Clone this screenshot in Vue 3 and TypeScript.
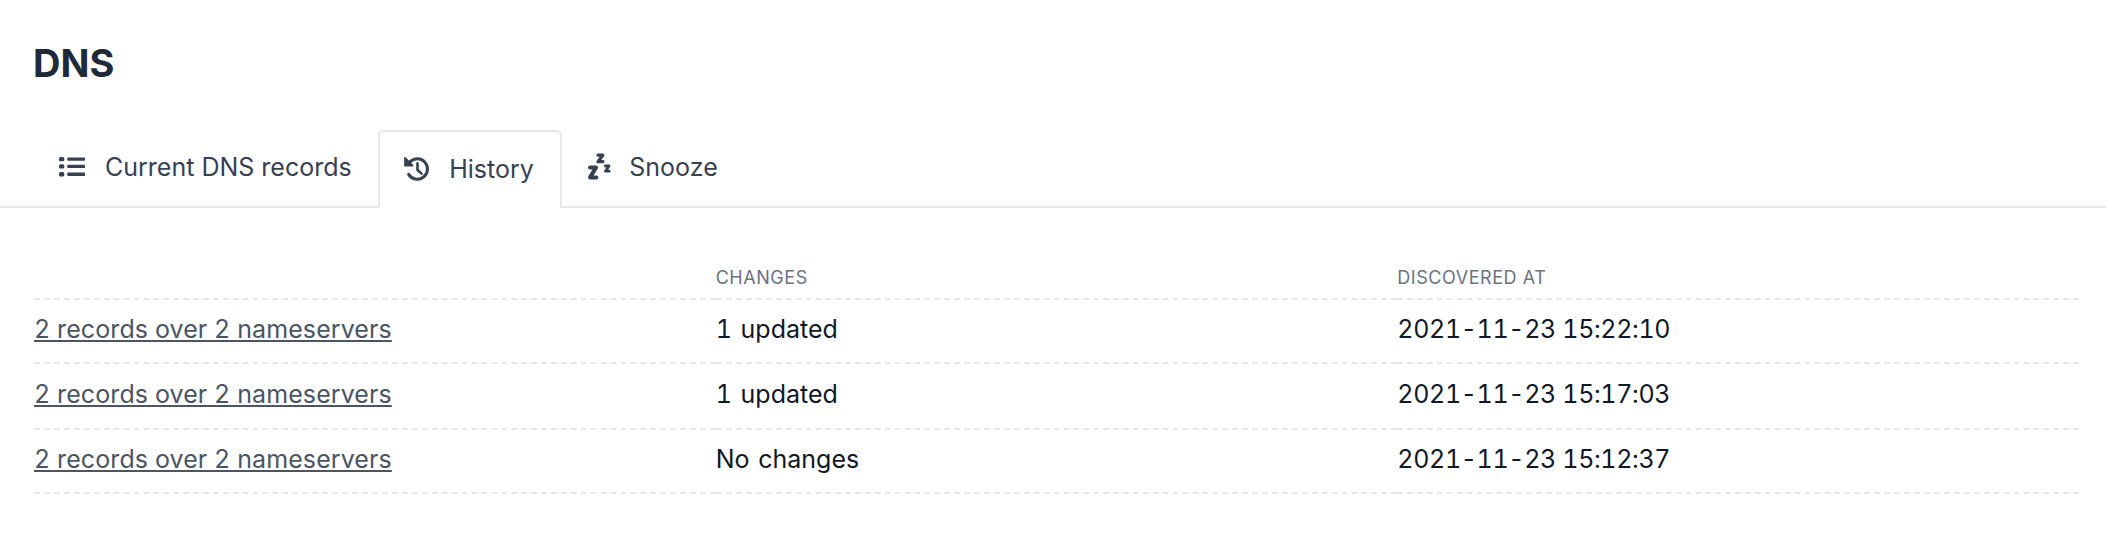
<script setup lang="ts">
interface Row { changes: string; at: string }
const rows: Row[] = [
  { changes: '1 updated', at: '2021-11-23 15:22:10' },
  { changes: '1 updated', at: '2021-11-23 15:17:03' },
  { changes: 'No changes', at: '2021-11-23 15:12:37' },
]
</script>

<template>
  <div class="page">
    <h1 class="title">DNS</h1>
    <nav class="tabs">
      <a class="tab">
        <svg class="icon list" viewBox="0 0 28 24" fill="currentColor">
          <rect x="1" y="2" width="5.3" height="4.2" rx="1.5" />
          <rect x="1" y="9.2" width="5.3" height="4.4" rx="1.5" />
          <rect x="1" y="17" width="5.3" height="4.4" rx="1.5" />
          <rect x="9.3" y="2.4" width="17.7" height="3.4" rx="0.7" />
          <rect x="9.3" y="9.7" width="17.7" height="3.4" rx="0.7" />
          <rect x="9.3" y="17.5" width="17.7" height="3.4" rx="0.7" />
        </svg>
        <span>Current DNS records</span>
      </a>
      <a class="tab active">
        <svg class="icon history" viewBox="0 0 27 27" fill="none" stroke="currentColor">
          <path d="M7 6.9A10.2 10.2 0 1 1 5.6 19.4" stroke-width="3" stroke-linecap="round" />
          <path d="M2 3v7.6h7.6z" fill="currentColor" stroke-width="1.8" stroke-linejoin="round" />
          <path d="M14.5 8.2V15l4 3.6" stroke-width="2.6" stroke-linecap="round" stroke-linejoin="round" />
        </svg>
        <span>History</span>
      </a>
      <a class="tab">
        <svg class="icon snooze" viewBox="0 0 24 27" fill="none" stroke="currentColor" stroke-linecap="round" stroke-linejoin="round">
          <path d="M3 14.6h6L3 24.4h6.4" stroke-width="4" />
          <path d="M11 2.2h4.8L11 8.6h5" stroke-width="3.2" />
          <path d="M18.4 13h3.6L18.4 18.2h3.8" stroke-width="2.8" />
        </svg>
        <span>Snooze</span>
      </a>
    </nav>
    <table class="table">
      <thead>
        <tr>
          <th></th>
          <th>Changes</th>
          <th>Discovered at</th>
        </tr>
      </thead>
      <tbody>
        <tr v-for="(row, i) in rows" :key="i">
          <td><a class="link">2 records over 2 nameservers</a></td>
          <td class="changes">{{ row.changes }}</td>
          <td class="date">{{ row.at }}</td>
        </tr>
      </tbody>
    </table>
  </div>
</template>

<style>
html, body { margin: 0; background: #fff; }
</style>

<style scoped>
.page {
  font-family: Inter, "Liberation Sans", sans-serif;
  padding: 39px 27px 0 0;
  height: 497px;
  color: #111827;
}
.title {
  margin: 0 0 0 33px;
  font-size: 38px;
  line-height: 48px;
  font-weight: 700;
  color: #1f2937;
}
.tabs {
  display: flex;
  margin: 43px -27px 0 0;
  padding-left: 35px;
  height: 76px;
  border-bottom: 2px solid #e5e7eb;
}
.tab {
  display: flex;
  align-items: center;
  gap: 19px;
  padding: 0 26.5px 3px 23px;
  font-size: 25px;
  color: #374151;
  height: 76px;
  box-sizing: border-box;
}
.tab.active {
  background: #fff;
  border: 2px solid #e5e7eb;
  border-bottom: none;
  border-radius: 6px 6px 0 0;
  padding: 0 26.5px 3px 23px;
  height: 78px;
}
.tab.active + .tab { padding-left: 25px; gap: 18px; }
.icon { flex: none; }
.list { width: 28px; height: 24px; }
.history { width: 27px; height: 27px; }
.snooze { width: 24px; height: 27px; }
.table {
  margin: 58px 0 0 34px;
  width: calc(100% - 34px);
  table-layout: fixed;
  border-collapse: collapse;
}
th {
  text-align: left;
  font-size: 18px;
  font-weight: 400;
  letter-spacing: 0.55px;
  text-transform: uppercase;
  color: #6b7280;
  padding: 0 0 8px;
  line-height: 24px;
  border-bottom: 2px dashed #e5e7eb;
}
td {
  font-size: 25px;
  font-variant-numeric: tabular-nums;
  height: 58px;
  padding: 0 0 4px;
  border-bottom: 2px dashed #e5e7eb;
}
tr:nth-child(2) td { height: 60px; }
tr:nth-child(3) td { height: 58px; }
.changes { word-spacing: 2px; }
.date { letter-spacing: -0.35px; }
.link {
  color: #4b5563;
  text-decoration: underline;
  letter-spacing: 0.09px;
}
</style>
